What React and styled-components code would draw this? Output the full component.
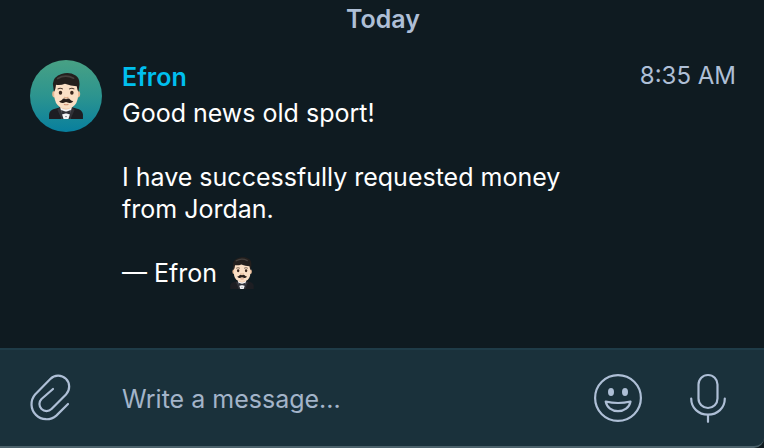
import React from "react";
import styled, { createGlobalStyle } from "styled-components";

const GlobalStyle = createGlobalStyle`
  *, *::before, *::after { box-sizing: border-box; }
  body {
    margin: 0;
    background: #0f1b21;
    color: #ffffff;
    font-family: Inter, "Liberation Sans", sans-serif;
    font-size: 25px;
    line-height: 32px;
  }
`;

const Page = styled.main`
  display: flex;
  flex-direction: column;
  min-height: 100vh;
`;

const Conversation = styled.section`
  flex: 1;
  padding: 3px 28px 24px 30px;
`;

const DateLabel = styled.h2`
  margin: 0 0 25px;
  color: #aebfd6;
  font-size: 25px;
  font-weight: 600;
  line-height: 32px;
  text-align: center;
`;

const Message = styled.article`
  display: grid;
  grid-template-columns: 72px minmax(0, 1fr);
  column-gap: 20px;
`;

const Avatar = styled.div`
  display: flex;
  justify-content: center;
  align-items: center;
  width: 72px;
  height: 72px;
  border-radius: 50%;
  background: linear-gradient(#48a184, #2c948f 50%, #087f9e);
`;

const MessageHeader = styled.header`
  display: flex;
  justify-content: space-between;
  align-items: flex-start;
  height: 37px;
`;

const Sender = styled.h3`
  margin: 0;
  color: #00bfee;
  font-size: 25px;
  font-weight: 600;
  line-height: 34px;
`;

const Time = styled.time`
  color: #aebfd6;
  font-size: 24px;
  line-height: 32px;
`;

const MessageText = styled.p`
  max-width: 480px;
  margin: 0 0 32px;
`;

const Signature = styled.p`
  display: flex;
  align-items: center;
  gap: 13px;
  margin: 0;
`;

const Composer = styled.form`
  display: flex;
  align-items: center;
  height: 100px;
  padding: 0 38px 0 29px;
  border-top: 2px solid #1f3c48;
  border-bottom: 2px solid #4c626b;
  border-bottom-right-radius: 10px;
  background: #1a313b;
`;

const IconButton = styled.button`
  display: flex;
  flex: none;
  padding: 0;
  border: 0;
  background: none;
  color: #aebfd6;
  cursor: pointer;
`;

const Actions = styled.div`
  display: flex;
  align-items: center;
  gap: 48px;
`;

const MessageInput = styled.input`
  flex: 1;
  min-width: 0;
  margin: 0 24px 0 51px;
  padding: 2px 0 0;
  border: 0;
  outline: 0;
  background: none;
  color: #ffffff;
  font: inherit;

  &::placeholder {
    color: #a3b4c9;
    opacity: 1;
  }
`;

const LineIcon = styled.svg`
  display: block;
  fill: none;
  stroke: currentColor;
  stroke-width: 2.2;
  stroke-linecap: round;
  stroke-linejoin: round;
`;

function Gentleman({ width, height }) {
  return (
    <svg width={width} height={height} viewBox="0 0 98 133" role="img" aria-label="Man in tuxedo">
      <path d="M0 133V119Q2 106 20 103L34 98H64L79 103Q96 107 98 119V133Z" fill="#1d1e23" />
      <path d="M32 99H66L61 133H37Z" fill="#f3f4f7" />
      <path d="M33 86H65V100Q49 111 33 100Z" fill="#e8b994" />
      <path d="M31 99L24 106L36 133H42ZM67 99L74 106L62 133H56Z" fill="#303137" />
      <path d="M35 107L47 111H51L63 107V121L51 117H47L35 121Z" fill="#303139" />
      <circle cx="49" cy="126" r="2" fill="#44454c" />
      <ellipse cx="16" cy="61" rx="7" ry="10" fill="#e8b994" />
      <ellipse cx="83" cy="61" rx="7" ry="10" fill="#e8b994" />
      <path d="M15 39Q18 19 49 19Q80 19 84 39V66Q83 89 67 99Q49 108 32 99Q16 89 15 66Z" fill="#fbdfc5" />
      <path d="M14 55L11 31Q13 10 36 3Q58 -4 77 7Q89 15 88 34L85 55Q82 50 80 38Q63 38 46 31Q34 36 20 34Q19 49 14 55Z" fill="#231f1d" />
      <path d="M25 16Q47 3 71 15" fill="none" stroke="#45403d" strokeWidth="5" strokeLinecap="round" />
      <path d="M26 46Q32 42 39 46M59 46Q66 42 72 46" fill="none" stroke="#4d3c30" strokeWidth="3" strokeLinecap="round" />
      <ellipse cx="33" cy="57" rx="5" ry="6" fill="#3a261d" />
      <ellipse cx="66" cy="57" rx="5" ry="6" fill="#3a261d" />
      <path d="M44 70Q49 74 55 70" fill="none" stroke="#dba57f" strokeWidth="3" strokeLinecap="round" />
      <path d="M49 76Q42 71 37 78Q33 82 29 81Q33 89 43 86L49 84L56 86Q66 89 70 81Q66 82 62 78Q57 71 49 76Z" fill="#2a1e1a" />
      <path d="M44 91Q49 93 55 91" fill="none" stroke="#d08e72" strokeWidth="3" strokeLinecap="round" />
    </svg>
  );
}

function PaperclipIcon() {
  return (
    <LineIcon width="42" height="48" viewBox="0 0 42 48" aria-hidden="true">
      <path d="M39 30L27.3 41.6A15 15 0 0 1 6.1 20.5L21.3 4.9A11 11 0 0 1 37 20.4L22.5 35A7 7 0 0 1 12.5 25L24 15" />
    </LineIcon>
  );
}

function SmileIcon() {
  return (
    <LineIcon width="48" height="48" viewBox="0 0 48 48" aria-hidden="true">
      <circle cx="24" cy="24" r="22.9" />
      <ellipse cx="17" cy="18" rx="3" ry="4" fill="currentColor" stroke="none" />
      <ellipse cx="31" cy="18" rx="3" ry="4" fill="currentColor" stroke="none" />
      <path d="M11.7 27.5Q24 30.5 36.5 27.5C35.5 33.5 30 37.2 24 37.2S12.8 33.5 11.7 27.5Z" />
    </LineIcon>
  );
}

function MicrophoneIcon() {
  return (
    <LineIcon width="36" height="50" viewBox="0 0 36 50" aria-hidden="true">
      <rect x="8.5" y="2" width="19" height="33" rx="9.5" />
      <path d="M1.2 25.5C1.2 35 8.5 41.7 18 41.7S34.8 35 34.8 25.5M18 41.7V48.8" />
    </LineIcon>
  );
}

export default function App() {
  return (
    <>
      <GlobalStyle />
      <Page>
        <Conversation>
          <DateLabel>Today</DateLabel>
          <Message>
            <Avatar>
              <Gentleman width={34} height={46} />
            </Avatar>
            <div>
              <MessageHeader>
                <Sender>Efron</Sender>
                <Time dateTime="08:35">8:35 AM</Time>
              </MessageHeader>
              <MessageText>Good news old sport!</MessageText>
              <MessageText>I have successfully requested money from Jordan.</MessageText>
              <Signature>
                <span>— Efron</span>
                <Gentleman width={24} height={32} />
              </Signature>
            </div>
          </Message>
        </Conversation>
        <Composer onSubmit={(event) => event.preventDefault()}>
          <IconButton type="button" aria-label="Attach a file">
            <PaperclipIcon />
          </IconButton>
          <MessageInput type="text" aria-label="Message" placeholder="Write a message..." />
          <Actions>
            <IconButton type="button" aria-label="Choose an emoji">
              <SmileIcon />
            </IconButton>
            <IconButton type="button" aria-label="Record a voice message">
              <MicrophoneIcon />
            </IconButton>
          </Actions>
        </Composer>
      </Page>
    </>
  );
}
